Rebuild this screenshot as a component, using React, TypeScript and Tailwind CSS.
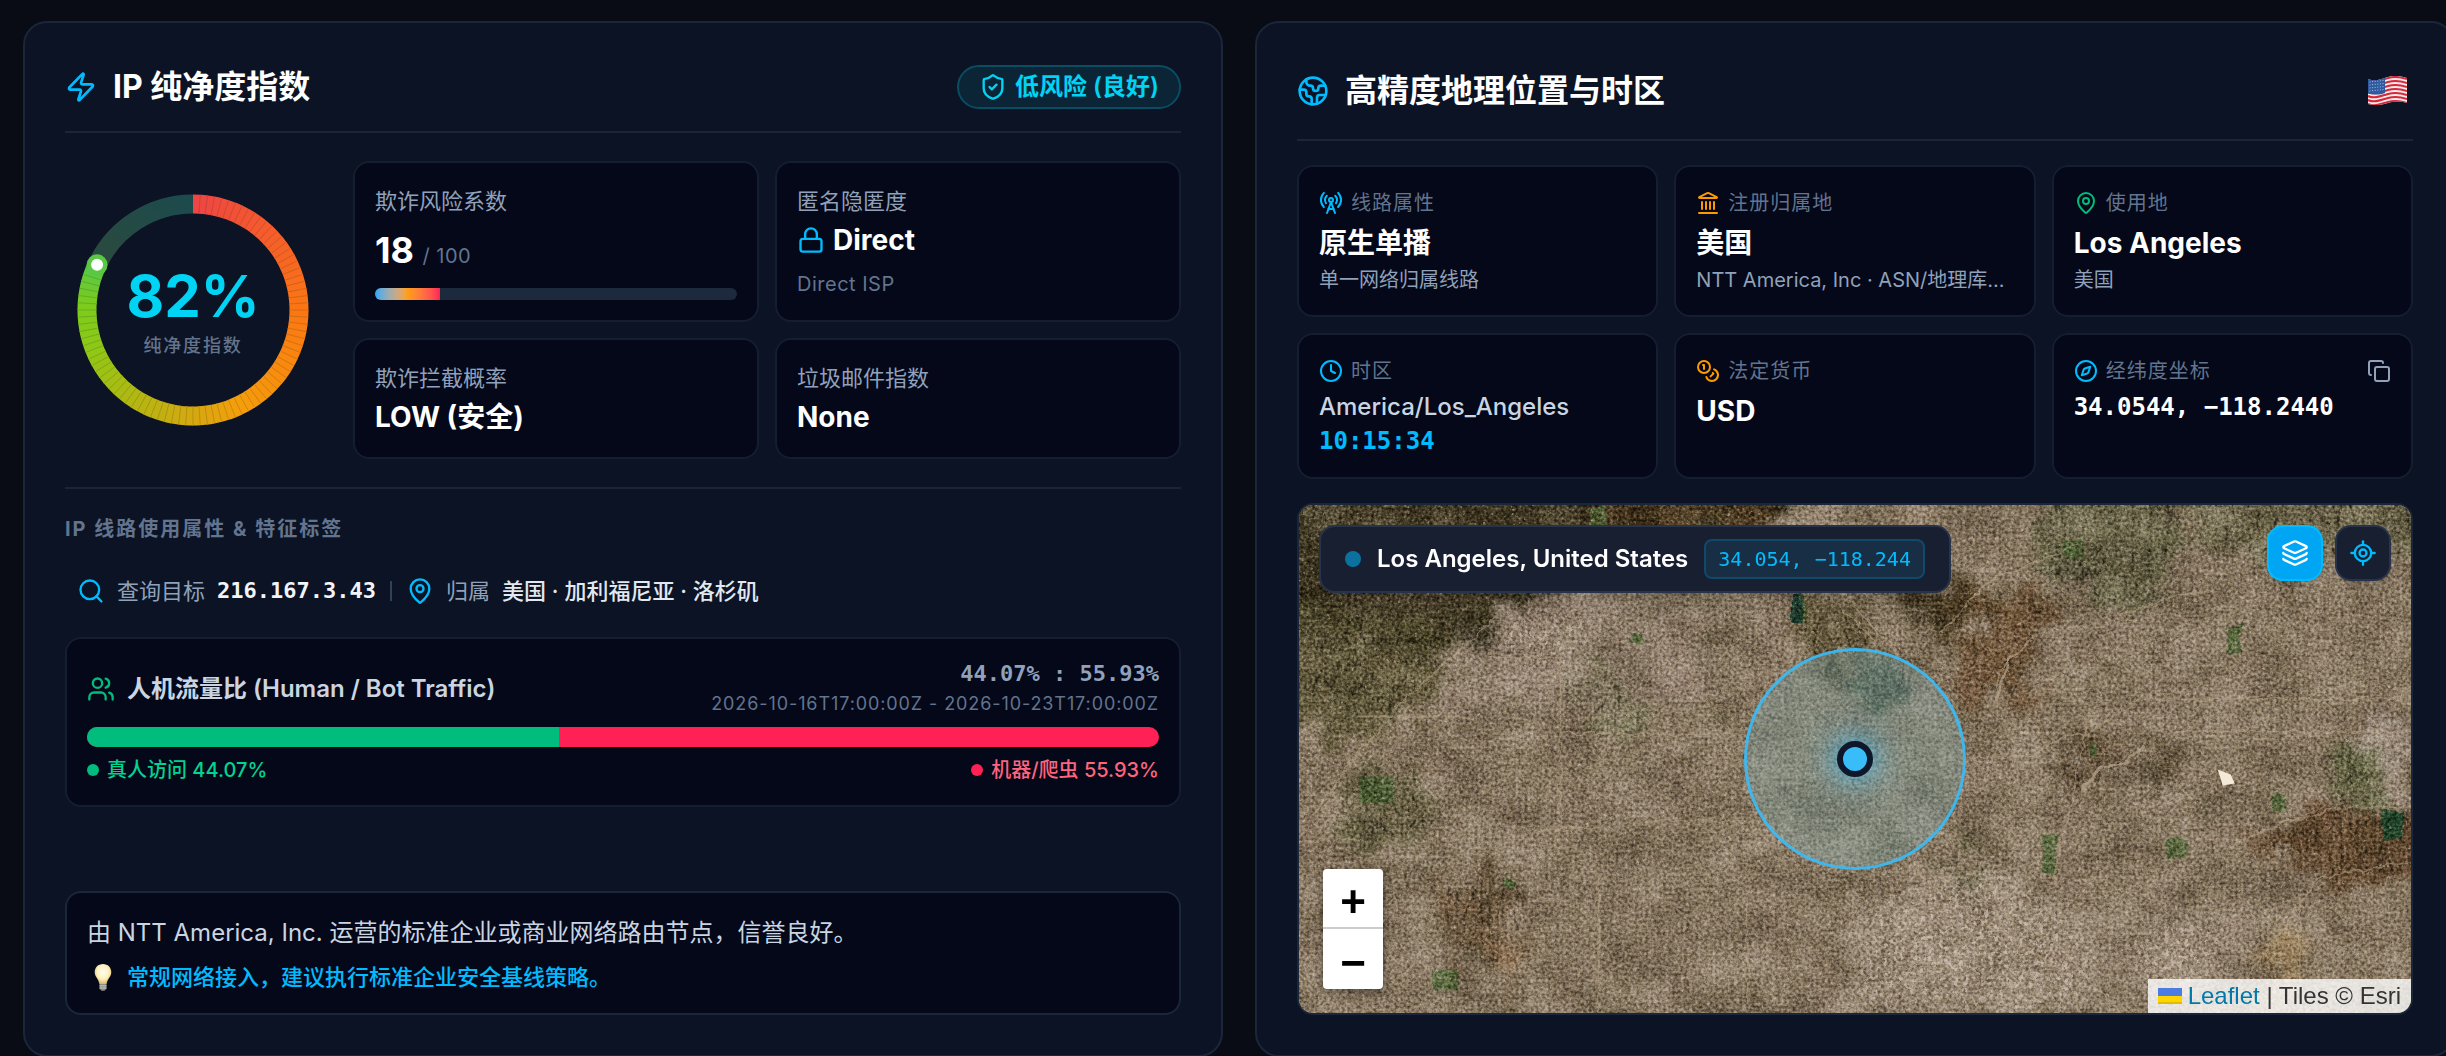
import React from "react";
import {
  Clock,
  Compass,
  Copy,
  Coins,
  Earth,
  Landmark,
  Layers,
  LocateFixed,
  Lock,
  MapPin,
  RadioTower,
  Search,
  ShieldCheck,
  Users,
  Zap,
} from "lucide-react";

const MONO = "font-['DejaVu_Sans_Mono','Liberation_Mono',monospace]";

const GAUGE_STOPS: [number, number[]][] = [
  [0, [239, 68, 68]],
  [0.25, [251, 118, 19]],
  [0.43, [245, 158, 11]],
  [0.5, [213, 168, 15]],
  [0.7, [139, 201, 22]],
  [0.76, [122, 204, 30]],
  [0.82, [84, 200, 72]],
];

const gaugeColor = (t: number) => {
  const next = GAUGE_STOPS.findIndex(([at]) => at >= t);
  if (next <= 0) return `rgb(${GAUGE_STOPS[0][1].join(",")})`;
  const [a, from] = GAUGE_STOPS[next - 1];
  const [b, to] = GAUGE_STOPS[next];
  const mix = from.map((c, i) => Math.round(c + ((to[i] - c) * (t - a)) / (b - a)));
  return `rgb(${mix.join(",")})`;
};

const polar = (t: number, r: number) => {
  const angle = t * Math.PI * 2;
  return [128 + Math.sin(angle) * r, 128 - Math.cos(angle) * r];
};

const arc = (from: number, to: number, r: number) => {
  const [x1, y1] = polar(from, r);
  const [x2, y2] = polar(to, r);
  return `M${x1.toFixed(2)} ${y1.toFixed(2)}A${r} ${r} 0 0 1 ${x2.toFixed(2)} ${y2.toFixed(2)}`;
};

const Gauge = ({ value }: { value: number }) => {
  const ratio = value / 100;
  const [dotX, dotY] = polar(ratio, 106);
  return (
    <div className="relative size-64 shrink-0">
      <svg viewBox="0 0 256 256" className="size-full" aria-hidden="true">
        <defs>
          <linearGradient id="rest" x1="0" y1="1" x2="1" y2="0">
            <stop offset="0" stopColor="#2b4a3e" />
            <stop offset="1" stopColor="#1d4a4d" />
          </linearGradient>
        </defs>
        <path d={arc(ratio, 1, 106)} fill="none" stroke="url(#rest)" strokeWidth="19" />
        {Array.from({ length: value }, (_, i) => (
          <path
            key={i}
            d={arc(i / 100, Math.min((i + 1.1) / 100, ratio), 106)}
            fill="none"
            stroke={gaugeColor((i + 0.5) / 100)}
            strokeWidth="19"
          />
        ))}
        {Array.from({ length: value - 1 }, (_, i) => {
          const [x1, y1] = polar((i + 1) / 100, 97);
          const [x2, y2] = polar((i + 1) / 100, 115);
          return (
            <line key={i} x1={x1} y1={y1} x2={x2} y2={y2} stroke="#3b3a20" strokeOpacity="0.3" strokeWidth="0.7" />
          );
        })}
        <circle cx={dotX} cy={dotY} r="10.5" fill="#5ac845" />
        <circle cx={dotX} cy={dotY} r="6" fill="#fff" />
      </svg>
      <div className="absolute inset-0 flex flex-col items-center justify-center">
        <span className="text-[58px] leading-[72px] font-bold text-cyan-400">{value}%</span>
        <span className="text-lg leading-7 font-medium tracking-widest text-slate-500">纯净度指数</span>
      </div>
    </div>
  );
};

const Tile = ({ label, children }: { label: string; children: React.ReactNode }) => (
  <div className="rounded-2xl border-2 border-[#141e30] bg-[#040819] p-5">
    <h3 className="text-[22px] leading-[37px] text-slate-400">{label}</h3>
    {children}
  </div>
);

type InfoProps = {
  icon: React.ReactNode;
  label: string;
  action?: React.ReactNode;
  children: React.ReactNode;
};

const InfoTile = ({ icon, label, action, children }: InfoProps) => (
  <div className="min-w-0 rounded-2xl border-2 border-[#141e30] bg-[#040819] p-5">
    <div className="mb-1 flex h-8 items-center gap-2">
      {icon}
      <h3 className="text-xl tracking-wider text-slate-500">{label}</h3>
      {action}
    </div>
    {children}
  </div>
);

const Bulb = () => (
  <svg viewBox="0 0 32 32" className="size-8 shrink-0" aria-hidden="true">
    <defs>
      <radialGradient id="glass" cx="0.5" cy="0.4" r="0.6">
        <stop offset="0" stopColor="#fffef2" />
        <stop offset="0.6" stopColor="#fff0bb" />
        <stop offset="1" stopColor="#d9b765" />
      </radialGradient>
    </defs>
    <path d="M16 3c-5 0-8.300 3.600-8.300 8 0 5 3.900 6.500 4.700 12h7.200c.8-5.500 4.700-7 4.700-12 0-4.400-3.300-8-8.300-8z" fill="url(#glass)" />
    <path d="M12.500 23h7v4.500l-2 2.200h-3l-2-2.200z" fill="#8d8a86" />
    <path d="M12.500 24.800h7M12.500 27h7" stroke="#d6d3cd" strokeWidth="0.9" />
  </svg>
);

const wave = (y: number) =>
  `M0 ${y + 1}C7 ${y + 4} 13 ${y + 1} 20 ${y - 1}S33 ${y - 2} 39 ${y}`;

const UsFlag = () => (
  <svg viewBox="0 0 39 30" className="mr-1.5 h-[30px] w-[39px]" role="img" aria-label="United States">
    <defs>
      <clipPath id="cloth">
        <path d="M0 3C7 6 13 3 20 1S33 0 39 2V27C33 25 26 25 20 27S7 30 0 28Z" />
      </clipPath>
    </defs>
    <g clipPath="url(#cloth)">
      <rect width="39" height="30" fill="#f3eeee" />
      {[2, 6, 10, 14, 18, 22, 26].map((y) => (
        <path key={y} d={wave(y + 1)} fill="none" stroke="#d92638" strokeWidth="2.100" />
      ))}
      <path d="M0 0H17V17C11 19 7 19 0 17.500Z" fill="#2d5aa0" />
      {[5, 8, 11, 14].map((y) => (
        <path key={y} d={`M1.500 ${y + 1}L16 ${y - 0.5}`} stroke="#b9cbe6" strokeWidth="0.9" strokeDasharray="1 1.600" />
      ))}
    </g>
  </svg>
);

const HILLS = [
  ["M-20 -20H500L480 20 330 60 215 100 190 130 130 150 60 130 -20 130Z", "#352e18", 0.85],
  ["M-20 100L130 120 170 130 130 190 80 220 30 240 -20 210Z", "#57522f", 0.65],
  ["M250 -20H480L470 18 340 24Z", "#4e361a", 0.6],
  ["M490 80L530 90 600 150 575 200 545 195 500 130Z", "#5c5030", 0.6],
  ["M550 150L600 150 612 180 590 205 550 195Z", "#3f4a38", 0.7],
  ["M600 80L700 84 660 130 630 120Z", "#46361a", 0.8],
  ["M670 95L750 90 760 110 720 160 740 190 700 205 660 185 655 150 690 120Z", "#624122", 0.6],
  ["M755 -20H880L880 70 840 105 790 90 740 70 730 40Z", "#525635", 0.55],
  ["M880 -20H1130V50L1000 60 900 40Z", "#5f5f3f", 0.5],
  ["M780 235L800 225 845 232 810 275 780 295 770 270Z", "#5a4429", 0.5],
  ["M860 240L880 230 870 290 850 300Z", "#4f4026", 0.5],
  ["M950 325L1020 305 1112 300 1130 370 1040 385 1010 360 960 350Z", "#583a20", 0.7],
  ["M1030 240L1075 235 1090 300 1060 310 1035 280Z", "#59603a", 0.6],
  ["M45 270L110 260 140 300 115 340 50 340Z", "#5b5a38", 0.5],
  ["M133 370L225 380 232 430 215 478 175 450 140 420Z", "#5f472c", 0.55],
  ["M283 155L305 155 350 200 348 228 290 225Z", "#646642", 0.5],
  ["M640 350L690 350 700 390 670 385Z", "#62603e", 0.5],
] as const;

const ROADS = [
  "M-5 335H62",
  "M18 305L60 250 100 200 200 110",
  "M61 211H154L175 214",
  "M190 152H262V310",
  "M268 228L425 229",
  "M347 315H454",
  "M230 325L300 322",
  "M448 395V507",
  "M668 252L733 251 765 230H786L840 194 1112 193",
  "M790 208L772 295 754 378",
  "M875 226H1112",
  "M947 472L1020 372 1112 355",
  "M1040 302H1112",
  "M930 340L980 318 1040 302",
  "M695 200L700 165 735 130",
  "M640 130L690 75 780 40",
  "M530 90L575 135M540 85L600 150",
  "M300 370V507",
  "M611 362L660 400 768 468 780 507",
  "M640 370L760 440 820 507",
  "M820 110L880 90 920 85",
  "M1000 390V507",
] as const;

const PARKS = [
  [331, 128, 14, 10],
  [498, 88, 8, 30],
  [292, 2, 16, 18],
  [928, 120, 14, 28],
  [866, 332, 22, 20],
  [742, 330, 16, 40],
  [62, 272, 34, 26],
  [764, 36, 20, 16],
  [134, 464, 26, 20],
  [788, 238, 9, 12],
  [206, 374, 12, 8],
  [972, 290, 14, 14],
] as const;

// Procedural aerial imagery: tinted terrain under several octaves of grain
const Terrain = () => (
  <svg
    viewBox="0 0 1112 507"
    preserveAspectRatio="xMidYMid slice"
    className="absolute inset-0 size-full"
    aria-hidden="true"
  >
    <defs>
      <filter id="rough" x="-10%" y="-10%" width="120%" height="120%" colorInterpolationFilters="sRGB">
        <feTurbulence type="fractalNoise" baseFrequency="0.035" numOctaves="5" seed="8" result="n" />
        <feDisplacementMap in="SourceGraphic" in2="n" scale="70" xChannelSelector="R" yChannelSelector="G" />
        <feGaussianBlur stdDeviation="4" />
      </filter>
      <filter id="edge" x="-10%" y="-10%" width="120%" height="120%" colorInterpolationFilters="sRGB">
        <feTurbulence type="fractalNoise" baseFrequency="0.08" numOctaves="3" seed="3" result="n" />
        <feDisplacementMap in="SourceGraphic" in2="n" scale="8" xChannelSelector="R" yChannelSelector="G" />
      </filter>
      <filter id="grain" x="0" y="0" width="100%" height="100%" colorInterpolationFilters="sRGB">
        <feTurbulence type="fractalNoise" baseFrequency="0.34" numOctaves="3" seed="21" />
        <feColorMatrix values="1.700 0 0 0 -.37  1.600 .1 0 0 -.37  1.500 0 .2 0 -.37  0 0 0 0 1" />
      </filter>
      <filter id="columns" x="0" y="0" width="100%" height="100%" colorInterpolationFilters="sRGB">
        <feTurbulence type="fractalNoise" baseFrequency="0.3 0.03" numOctaves="2" seed="2" />
        <feColorMatrix values="2 0 0 0 -.5  2 0 0 0 -.5  2 0 0 0 -.5  0 0 0 0 1" />
      </filter>
      <filter id="rows" x="0" y="0" width="100%" height="100%" colorInterpolationFilters="sRGB">
        <feTurbulence type="fractalNoise" baseFrequency="0.03 0.3" numOctaves="2" seed="6" />
        <feColorMatrix values="2 0 0 0 -.5  2 0 0 0 -.5  2 0 0 0 -.5  0 0 0 0 1" />
      </filter>
      <filter id="patches" x="0" y="0" width="100%" height="100%" colorInterpolationFilters="sRGB">
        <feTurbulence type="fractalNoise" baseFrequency="0.02 0.025" numOctaves="5" seed="5" />
        <feColorMatrix values="1.600 0 0 0 -.3  1.500 0 .1 0 -.3  1.500 0 0 0 -.27  0 0 0 0 1" />
      </filter>
      <filter id="ridges" x="-10%" y="-10%" width="120%" height="120%" colorInterpolationFilters="sRGB">
        <feTurbulence type="turbulence" baseFrequency="0.06 0.022" numOctaves="4" seed="14" result="t" />
        <feColorMatrix in="t" values="0 0 0 0 .13  0 0 0 0 .11  0 0 0 0 .05  -7 0 0 0 1.300" result="c" />
        <feGaussianBlur in="SourceAlpha" stdDeviation="8" result="m" />
        <feComposite in="c" in2="m" operator="in" />
      </filter>
      <filter id="specks" x="0" y="0" width="100%" height="100%" colorInterpolationFilters="sRGB">
        <feTurbulence type="fractalNoise" baseFrequency="0.24" numOctaves="2" seed="33" />
        <feColorMatrix values="0 0 0 0 .86  0 0 0 0 .82  0 0 0 0 .76  10 0 0 0 -7" />
      </filter>
      <filter id="blocks" x="-10%" y="-10%" width="120%" height="120%" colorInterpolationFilters="sRGB">
        <feTurbulence type="fractalNoise" baseFrequency="0.2" numOctaves="3" seed="9" result="t" />
        <feColorMatrix in="t" values="0 0 0 0 .84  0 0 0 0 .79  0 0 0 0 .74  9 0 0 0 -5.200" result="c" />
        <feGaussianBlur in="SourceAlpha" stdDeviation="14" result="m" />
        <feComposite in="c" in2="m" operator="in" />
      </filter>
    </defs>
    <rect width="1112" height="507" fill="#8a7963" />
    <g filter="url(#rough)">
      {HILLS.map(([d, fill, opacity]) => (
        <path key={d} d={d} fill={fill} opacity={opacity} />
      ))}
      <path d="M550 400L700 350 800 430 820 507H540Z" fill="#a89888" opacity="0.45" />
      <path d="M820 400L960 400 940 480 850 507Z" fill="#a39282" opacity="0.35" />
      <path d="M150 120L300 80 420 110 400 200 200 200 130 220Z" fill="#9a8a7a" opacity="0.4" />
      <path d="M1060 210H1112V290L1080 270Z" fill="#a39488" opacity="0.6" />
      <path d="M975 440L1000 425 1010 440 980 507H945Z" fill="#a88d68" opacity="0.8" />
      <path d="M145 385L160 390 220 460 210 478Z" fill="#a08060" opacity="0.7" />
    </g>
    <g filter="url(#ridges)" opacity="0.7">
      {HILLS.map(([d]) => (
        <path key={d} d={d} />
      ))}
    </g>
    <g filter="url(#edge)">
      {PARKS.map(([x, y, w, h]) => (
        <rect key={`${x}-${y}`} x={x} y={y} width={w} height={h} fill="#4a6232" opacity="0.75" />
      ))}
      <rect x="493" y="90" width="9" height="28" fill="#1f3f30" />
      <rect x="1082" y="306" width="20" height="28" fill="#1f4226" />
    </g>
    <rect width="1112" height="507" filter="url(#patches)" className="mix-blend-soft-light" opacity="0.35" />
    <rect width="1112" height="507" filter="url(#columns)" className="mix-blend-soft-light" opacity="0.22" />
    <rect width="1112" height="507" filter="url(#rows)" className="mix-blend-soft-light" opacity="0.18" />
    <rect width="1112" height="507" filter="url(#grain)" className="mix-blend-soft-light" opacity="0.8" />
    <g filter="url(#blocks)" opacity="0.65">
      <path d="M570 390L700 360 790 430 800 507H550Z" />
      <path d="M830 430L920 400 930 480 830 490Z" />
      <path d="M190 120L290 100 300 140 210 170Z" />
      <path d="M1070 220H1112V280L1090 260Z" />
      <path d="M840 130L890 120 880 160 840 160Z" />
    </g>
    <rect width="1112" height="507" filter="url(#specks)" opacity="0.4" />
    <g fill="none" stroke="#bda98e" strokeWidth="1.600" opacity="0.5" filter="url(#edge)">
      {ROADS.map((d) => (
        <path key={d} d={d} />
      ))}
    </g>
    <path
      d="M783 285L800 262 825 258 843 240M697 195L712 150"
      fill="none"
      stroke="#b8a58f"
      strokeWidth="3"
      opacity="0.7"
      filter="url(#edge)"
    />
    <path d="M918 264l13 5 4 9-12 2z" fill="#f4e9d6" />
  </svg>
);

const LocationMap = () => (
  <div className="relative isolate mt-6 min-h-[512px] flex-1 overflow-hidden rounded-2xl border-2 border-[#1a2639] bg-[#8a7963]">
    <Terrain />

    {/* accuracy radius and marker */}
    <div className="absolute top-1/2 left-1/2 flex size-[222px] -translate-1/2 items-center justify-center rounded-full border-[3px] border-[#38bdf8]/90 bg-[#7fa8ac]/35">
      <span className="size-9 rounded-full border-[6px] border-slate-900 bg-[#38bdf8] shadow-[0_0_32px_#38bdf8]" />
    </div>

    <div className="absolute top-5 left-5 flex items-center gap-4 rounded-2xl border-2 border-[#26334b] bg-[#181f30] px-6 py-3 shadow-xl">
      <span className="size-4 rounded-full bg-[#0b719f]" />
      <span className="text-2xl leading-9 font-semibold text-white">Los Angeles, United States</span>
      <span className={`rounded-lg border-2 border-[#12496a] bg-[#182e44] px-3 py-px text-xl leading-[34px] text-sky-400 ${MONO}`}>
        34.054, −118.244
      </span>
    </div>

    <div className="absolute top-5 right-5 flex gap-3">
      <button
        type="button"
        aria-label="切换图层"
        className="flex size-14 items-center justify-center rounded-2xl border-2 border-sky-400 bg-sky-500 text-white shadow-lg"
      >
        <Layers size={28} />
      </button>
      <button
        type="button"
        aria-label="定位"
        className="flex size-14 items-center justify-center rounded-2xl border-2 border-[#26334b] bg-[#181f30] text-sky-400 shadow-lg"
      >
        <LocateFixed size={28} />
      </button>
    </div>

    <div className="absolute bottom-6 left-6 w-[60px] overflow-hidden rounded-sm bg-white font-['Liberation_Sans',sans-serif] text-[44px] leading-[48px] font-bold text-black shadow-[0_2px_8px_rgba(0,0,0,0.5)]">
      <button type="button" aria-label="Zoom in" className="block h-15 w-full border-b-2 border-[#ccc] pt-2">
        +
      </button>
      <button type="button" aria-label="Zoom out" className="block h-15 w-full pt-2">
        −
      </button>
    </div>

    <div className="absolute right-0 bottom-0 flex items-center bg-white/80 px-2.5 font-['Liberation_Sans',sans-serif] text-2xl leading-[34px] text-[#333]">
      <a href="https://leafletjs.com" className="flex items-center gap-1.5 text-[#0078a8]">
        <svg viewBox="0 0 24 16" className="h-4 w-6" aria-hidden="true">
          <path fill="#4c7be1" d="M0 0h24v8H0z" />
          <path fill="#ffd500" d="M0 8h24v6H0z" />
          <path fill="#e0bc00" d="M0 14h24v2H0z" />
        </svg>
        Leaflet
      </a>
      <span className="whitespace-pre"> | Tiles © Esri</span>
    </div>
  </div>
);

const PurityCard = () => (
  <section className="flex flex-col rounded-3xl border-2 border-[#1a2639] bg-[#0c1324] p-10">
    <header className="mb-7 flex items-center justify-between border-b-2 border-[#1a2538] pb-5">
      <h2 className="flex items-center gap-4 text-[32px] leading-12 font-bold text-white">
        <Zap size={32} className="text-sky-400" />
        IP 纯净度指数
      </h2>
      <span className="flex items-center gap-2 rounded-full border-2 border-[#094d62] bg-[#0b2436] px-5 py-1 text-2xl leading-8 font-semibold text-cyan-400">
        <ShieldCheck size={28} />
        低风险 (良好)
      </span>
    </header>

    <div className="flex items-center gap-8">
      <Gauge value={82} />
      <div className="grid flex-1 grid-cols-2 gap-4">
        <Tile label="欺诈风险系数">
          <p className="mt-2 text-4xl leading-11 font-bold text-white">
            18 <span className="text-xl font-normal tracking-wide text-slate-500">/ 100</span>
          </p>
          <div className="mt-4 h-3 overflow-hidden rounded-full bg-slate-800">
            <div
              className="h-full bg-linear-to-r from-[#1ea7f5] via-[#ff9f0a] to-[#ff2056]"
              style={{ width: "18%" }}
            />
          </div>
        </Tile>
        <Tile label="匿名隐匿度">
          <p className="flex items-center gap-2 text-[28px] leading-10 font-bold text-white">
            <Lock size={28} className="text-sky-400" />
            Direct
          </p>
          <p className="mt-2 text-xl leading-8 tracking-wide text-slate-500">Direct ISP</p>
        </Tile>
        <Tile label="欺诈拦截概率">
          <p className="text-[28px] leading-10 font-bold text-white">LOW (安全)</p>
        </Tile>
        <Tile label="垃圾邮件指数">
          <p className="text-[28px] leading-10 font-bold text-white">None</p>
        </Tile>
      </div>
    </div>

    <div className="mt-7 border-t-2 border-[#1a2538] pt-6">
      <h3 className="text-xl leading-8 font-bold tracking-widest text-slate-500">
        IP 线路使用属性 &amp; 特征标签
      </h3>
      <div className="mt-7 flex items-center gap-3 px-3 text-[22px] leading-9 text-slate-400">
        <Search size={28} className="text-sky-400" />
        查询目标
        <span className={`font-bold text-slate-100 ${MONO}`}>216.167.3.43</span>
        <span className="mx-0.5 h-5 w-0.5 bg-slate-700" />
        <MapPin size={28} className="text-sky-400" />
        归属
        <span className="font-medium text-slate-200">美国 · 加利福尼亚 · 洛杉矶</span>
      </div>
    </div>

    <div className="mt-7 rounded-2xl border-2 border-[#141e30] bg-[#040819] p-5">
      <div className="flex items-center justify-between">
        <h3 className="flex items-center gap-3 text-2xl font-semibold text-slate-300">
          <Users size={28} className="text-[#00bc7d]" />
          人机流量比 (Human / Bot Traffic)
        </h3>
        <div className="text-right leading-[30px]">
          <p className={`text-[22px] font-bold text-slate-400 ${MONO}`}>44.07% : 55.93%</p>
          <p className="text-lg leading-[30px] tracking-wider text-slate-500">
            2026-10-16T17:00:00Z - 2026-10-23T17:00:00Z
          </p>
        </div>
      </div>
      <div className="mt-2 flex h-5 overflow-hidden rounded-full bg-[#ff2056]">
        <div className="bg-[#00bc7d]" style={{ width: "44.07%" }} />
      </div>
      <div className="mt-2 flex items-center justify-between text-xl leading-[30px] font-medium">
        <span className="flex items-center gap-2 text-[#00d492]">
          <i className="size-3 rounded-full bg-[#00bc7d]" />
          真人访问 44.07%
        </span>
        <span className="flex items-center gap-2 text-[#ff637e]">
          <i className="size-3 rounded-full bg-[#ff2056]" />
          机器/爬虫 55.93%
        </span>
      </div>
    </div>

    <div className="mt-auto rounded-2xl border-2 border-[#1a2639] bg-[#040819] p-5">
      <p className="text-2xl leading-10 text-slate-300">
        由 NTT America, Inc. 运营的标准企业或商业网络路由节点，信誉良好。
      </p>
      <p className="mt-2 flex items-center gap-2 text-[22px] leading-8 font-medium text-sky-400">
        <Bulb />
        常规网络接入，建议执行标准企业安全基线策略。
      </p>
    </div>
  </section>
);

const GeoCard = () => (
  <section className="flex flex-col rounded-3xl border-2 border-[#1a2639] bg-[#0c1324] p-10">
    <header className="mb-6 flex h-[78px] items-center justify-between border-b-2 border-[#1a2538] pb-5">
      <h2 className="flex items-center gap-4 text-[32px] leading-12 font-bold text-white">
        <Earth size={32} className="text-sky-400" />
        高精度地理位置与时区
      </h2>
      <UsFlag />
    </header>

    <div className="grid grid-cols-3 gap-4">
      <InfoTile icon={<RadioTower size={24} className="text-sky-400" />} label="线路属性">
        <p className="text-[28px] leading-10 font-bold text-white">原生单播</p>
        <p className="mt-0.5 text-xl leading-[30px] text-slate-400">单一网络归属线路</p>
      </InfoTile>
      <InfoTile icon={<Landmark size={24} className="text-[#ff9900]" />} label="注册归属地">
        <p className="text-[28px] leading-10 font-bold text-white">美国</p>
        <p className="mt-0.5 text-xl leading-[30px] text-slate-400">NTT America, Inc · ASN/地理库...</p>
      </InfoTile>
      <InfoTile icon={<MapPin size={24} className="text-[#00bc7d]" />} label="使用地">
        <p className="text-[28px] leading-10 font-bold text-white">Los Angeles</p>
        <p className="mt-0.5 text-xl leading-[30px] text-slate-400">美国</p>
      </InfoTile>
      <InfoTile icon={<Clock size={24} className="text-sky-400" />} label="时区">
        <p className="text-2xl leading-8 font-medium text-slate-300">America/Los_Angeles</p>
        <p className={`mt-0.5 text-2xl leading-8 font-bold text-sky-400 ${MONO}`}>10:15:34</p>
      </InfoTile>
      <InfoTile icon={<Coins size={24} className="text-[#ff9900]" />} label="法定货币">
        <p className="text-[28px] leading-10 font-bold text-white">USD</p>
      </InfoTile>
      <InfoTile
        icon={<Compass size={24} className="text-sky-400" />}
        label="经纬度坐标"
        action={
          <button type="button" aria-label="复制坐标" className="ml-auto text-slate-400">
            <Copy size={24} />
          </button>
        }
      >
        <p className={`text-2xl leading-8 font-bold text-white ${MONO}`}>34.0544, −118.2440</p>
      </InfoTile>
    </div>

    <LocationMap />
  </section>
);

export default function App() {
  return (
    <main className="flex h-screen flex-col overflow-hidden bg-[#090c15] pt-[21px] font-['Inter','Noto_Sans_CJK_SC',sans-serif]">
      <div className="-mr-[9px] ml-[23px] grid flex-1 grid-cols-2 gap-8">
        <PurityCard />
        <GeoCard />
      </div>
    </main>
  );
}
